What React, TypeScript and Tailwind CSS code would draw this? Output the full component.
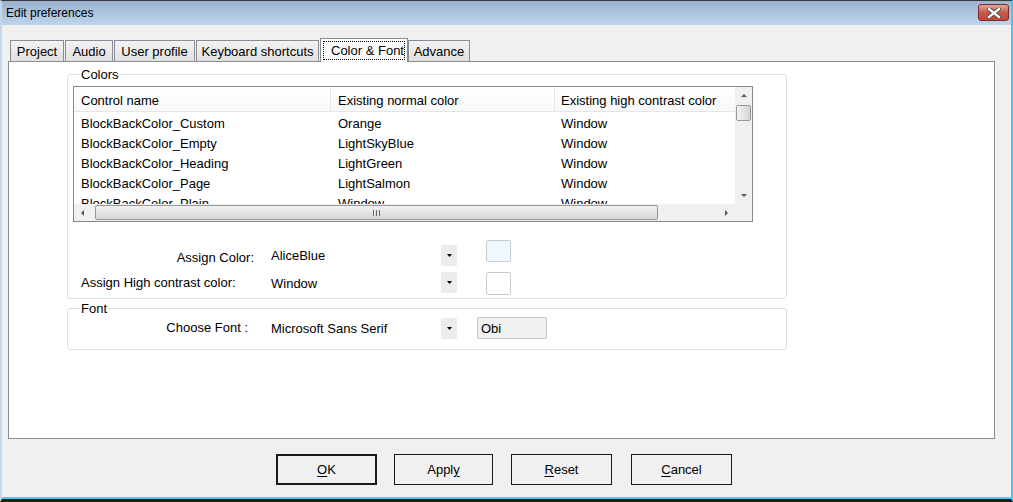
import React from "react";

const rows = [
  ["BlockBackColor_Custom", "Orange", "Window"],
  ["BlockBackColor_Empty", "LightSkyBlue", "Window"],
  ["BlockBackColor_Heading", "LightGreen", "Window"],
  ["BlockBackColor_Page", "LightSalmon", "Window"],
  ["BlockBackColor_Plain", "Window", "Window"],
];

function Arrow({ dir }: { dir: "up" | "down" | "left" | "right" }) {
  const d = {
    up: "M1 4 L4 1 L7 4 Z",
    down: "M1 1 L4 4 L7 1 Z",
    left: "M4 1 L1 4 L4 7 Z",
    right: "M1 1 L4 4 L1 7 Z",
  }[dir];
  const size = dir === "up" || dir === "down" ? "w-[8px] h-[5px]" : "w-[5px] h-[8px]";
  return (
    <svg viewBox={dir === "up" || dir === "down" ? "0 0 8 5" : "0 0 5 8"} className={size}>
      <path d={d} fill="#5a5a5a" />
    </svg>
  );
}

function DropButton({ className = "" }: { className?: string }) {
  return (
    <div className={"w-[16px] h-[21px] bg-[#ececec] flex items-center justify-center " + className}>
      <svg viewBox="0 0 5 3" className="w-[5px] h-[3px]">
        <path d="M0 0 L5 0 L2.5 3 Z" fill="#000" />
      </svg>
    </div>
  );
}

function Tab({ label, w }: { label: string; w: string }) {
  return (
    <div
      className={
        "h-[21px] border border-b-0 border-[#898c95] bg-gradient-to-b from-[#f3f3f3] to-[#e1e1e1] flex items-center justify-center " +
        w
      }
    >
      {label}
    </div>
  );
}

function Btn({ children, thick }: { children: React.ReactNode; thick?: boolean }) {
  return (
    <div
      className={
        "h-[31px] flex items-center justify-center bg-[#f0f0f0] border-[#1a1a1a] " +
        (thick ? "border-2" : "border")
      }
    >
      {children}
    </div>
  );
}

export default function App() {
  return (
    <div
      className="w-[1013px] h-[502px] flex flex-col bg-[#f0f0f0] border-t border-t-[#3c3c3c] border-l-2 border-l-[#c4d7ea] border-r-2 border-r-[#45c8f0] border-b-[3px] border-b-[#1c1c1c] text-[13px] leading-[15px] text-black overflow-hidden"
      style={{ fontFamily: '"Liberation Sans", Arial, sans-serif' }}
    >
      {/* title bar */}
      <div className="h-[24px] shrink-0 flex items-center justify-between bg-gradient-to-b from-[#9ab3cf] to-[#bdd4ec] pl-[4px] pr-[2px]">
        <span className="text-[12px]">Edit preferences</span>
        <div className="w-[31px] h-[17px] mt-[-1px] rounded-[3px] border border-[#7b2a25] bg-gradient-to-b from-[#e2a59d] via-[#c85a4c] to-[#c0483a] flex items-center justify-center">
          <svg viewBox="0 0 14 10" className="w-[14px] h-[10px]">
            <path d="M2 1 L12 9 M12 1 L2 9" stroke="#3b3b3b" strokeWidth="4" strokeLinecap="square" />
            <path d="M2 1 L12 9 M12 1 L2 9" stroke="#ffffff" strokeWidth="2.4" strokeLinecap="square" />
          </svg>
        </div>
      </div>

      {/* body */}
      <div className="flex-1 flex flex-col border-b-2 border-b-[#4ccdf2] pt-[13px]">
        {/* tabs */}
        <div className="flex items-end gap-[1px] pl-[8px]">
          <Tab label="Project" w="w-[54px]" />
          <Tab label="Audio" w="w-[48px]" />
          <Tab label="User profile" w="w-[81px]" />
          <Tab label="Keyboard shortcuts" w="w-[123px]" />
          <div className="relative z-10 h-[24px] -mb-px w-[88px] border border-b-0 border-[#898c95] bg-white pt-[2px] px-[2px]">
            <div className="h-[19px] border border-dotted border-black flex items-center pl-[7px] whitespace-nowrap overflow-hidden">
              Color &amp; Font
            </div>
          </div>
          <div className="-ml-px">
            <Tab label="Advance" w="w-[62px]" />
          </div>
        </div>

        {/* tab panel */}
        <div className="ml-[6px] w-[987px] h-[378px] border border-[#898c95] bg-white pt-[5px] pl-[58px]">
          <fieldset className="w-[720px] border border-[#d5dfe5] rounded-[3px] pl-[5px] pb-[2px]">
            <legend className="ml-[7px] px-[1px]">Colors</legend>
            {/* list view */}
            <div className="mt-[4px] w-[680px] h-[136px] border border-[#828790] flex">
              <div className="w-[661px] flex flex-col">
                <div className="h-[25px] flex border-b border-[#e5e5e5] bg-gradient-to-b from-white to-[#f7f8f9]">
                  <div className="w-[257px] pl-[7px] pt-[3px] flex items-center border-r border-[#e5e5e5]">Control name</div>
                  <div className="w-[224px] pl-[7px] pt-[3px] flex items-center border-r border-[#e5e5e5]">Existing normal color</div>
                  <div className="flex-1 pl-[6px] pt-[3px] flex items-center whitespace-nowrap overflow-hidden">Existing high contrast color</div>
                </div>
                <div className="h-[92px] pt-[1px] overflow-hidden">
                  {rows.map((r) => (
                    <div key={r[0]} className="h-[20px] flex items-center">
                      <div className="w-[257px] pl-[7px]">{r[0]}</div>
                      <div className="w-[224px] pl-[7px]">{r[1]}</div>
                      <div className="pl-[6px]">{r[2]}</div>
                    </div>
                  ))}
                </div>
                {/* horizontal scrollbar */}
                <div className="h-[17px] flex items-center bg-[#f0f0f0]">
                  <div className="w-[17px] h-[17px] flex items-center justify-center">
                    <Arrow dir="left" />
                  </div>
                  <div className="ml-[4px] w-[563px] h-[15px] rounded-[2px] border border-[#979797] bg-gradient-to-b from-[#f2f2f2] to-[#d6d6d6] flex items-center justify-center">
                    <svg viewBox="0 0 7 6" className="w-[7px] h-[6px]">
                      <path d="M0.5 0 V6 M3.5 0 V6 M6.5 0 V6" stroke="#6b6b6b" strokeWidth="1" />
                    </svg>
                  </div>
                  <div className="flex-1" />
                  <div className="w-[17px] h-[17px] flex items-center justify-center">
                    <Arrow dir="right" />
                  </div>
                </div>
              </div>
              {/* vertical scrollbar */}
              <div className="w-[17px] flex flex-col bg-[#f0f0f0]">
                <div className="h-[17px] flex items-center justify-center">
                  <Arrow dir="up" />
                </div>
                <div className="mt-[1px] mx-[1px] h-[16px] rounded-[2px] border border-[#979797] bg-gradient-to-r from-[#f2f2f2] to-[#d6d6d6]" />
                <div className="flex-1" />
                <div className="h-[17px] flex items-center justify-center">
                  <Arrow dir="down" />
                </div>
                <div className="h-[17px] bg-[#f0f0f0]" />
              </div>
            </div>

            {/* assign color */}
            <div className="mt-[18px] h-[26px] flex items-start">
              <div className="w-[181px] mt-[10px] text-right">
                Assi<u className="underline-offset-2">g</u>n Color:
              </div>
              <div className="w-[187px] mt-[8px] pl-[17px]">AliceBlue</div>
              <DropButton className="mt-[5px]" />
              <div className="ml-[29px] w-[25px] h-[22px] rounded-[2px] border border-[#c5ccd3] bg-[#f0f8ff]" />
            </div>
            <div className="mt-[6px] h-[24px] flex items-start">
              <div className="w-[181px] mt-[3px] pl-[8px] whitespace-nowrap">
                Assign Hi<u className="underline-offset-2">g</u>h contrast color:
              </div>
              <div className="w-[187px] mt-[4px] pl-[17px]">Window</div>
              <DropButton />
              <div className="ml-[29px] w-[25px] h-[23px] rounded-[2px] border border-[#c5ccd3] bg-white" />
            </div>
          </fieldset>

          <fieldset className="mt-[2px] w-[720px] border border-[#d5dfe5] rounded-[3px] pl-[5px] pb-[9px]">
            <legend className="ml-[7px] px-[1px]">Font</legend>
            <div className="mt-[1px] h-[23px] flex items-start">
              <div className="w-[181px] mt-[3px] pr-[6px] text-right">Choose Font :</div>
              <div className="w-[187px] mt-[4px] pl-[17px] whitespace-nowrap">Microsoft Sans Serif</div>
              <DropButton className="mt-[1px]" />
              <div className="ml-[20px] w-[70px] h-[22px] rounded-[2px] border border-[#c0c6cd] bg-[#f0f0f0] pl-[3px] flex items-center">
                Obi
              </div>
            </div>
          </fieldset>
        </div>

        {/* buttons */}
        <div className="mt-[15px] flex pl-[274px]">
          <div className="w-[101px]">
            <Btn thick>
              <span>
                <u className="underline-offset-2">O</u>K
              </span>
            </Btn>
          </div>
          <div className="ml-[17px] w-[99px]">
            <Btn>
              <span>
                Appl<u className="underline-offset-2">y</u>
              </span>
            </Btn>
          </div>
          <div className="ml-[18px] w-[101px]">
            <Btn>
              <span>
                <u className="underline-offset-2">R</u>eset
              </span>
            </Btn>
          </div>
          <div className="ml-[19px] w-[101px]">
            <Btn>
              <span>
                <u className="underline-offset-2">C</u>ancel
              </span>
            </Btn>
          </div>
        </div>
      </div>
    </div>
  );
}
